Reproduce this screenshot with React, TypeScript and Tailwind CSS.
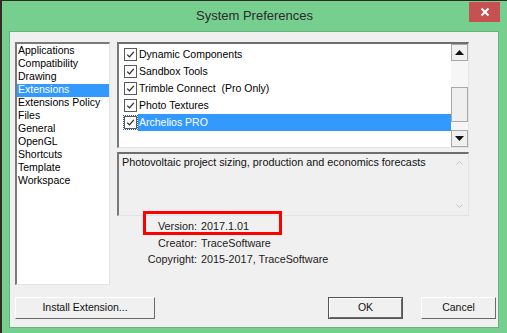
import React from 'react';

const categories = [
  'Applications',
  'Compatibility',
  'Drawing',
  'Extensions',
  'Extensions Policy',
  'Files',
  'General',
  'OpenGL',
  'Shortcuts',
  'Template',
  'Workspace',
];

const extensions = [
  { name: 'Dynamic Components', checked: true },
  { name: 'Sandbox Tools', checked: true },
  { name: 'Trimble Connect  (Pro Only)', checked: true },
  { name: 'Photo Textures', checked: true },
  { name: 'Archelios PRO', checked: true },
];

const details = [
  { label: 'Version:', value: '2017.1.01' },
  { label: 'Creator:', value: 'TraceSoftware' },
  { label: 'Copyright:', value: '2015-2017, TraceSoftware' },
];

function CheckBox({ focused }: { focused?: boolean }) {
  return (
    <div className={`flex h-[15px] w-[15px] items-center justify-center ${focused ? 'outline outline-1 outline-dotted outline-[#2a5fa8] -outline-offset-1' : ''}`}>
      <div className="flex h-[13px] w-[13px] items-center justify-center border border-[#5a5a5a] bg-white">
        <svg width="11" height="11" viewBox="0 0 11 11">
          <polyline points="2.2,5.6 4.5,7.9 8.8,2.8" fill="none" stroke="#2a2a2a" strokeWidth="1.3" />
        </svg>
      </div>
    </div>
  );
}

function Arrow({ up }: { up?: boolean }) {
  return (
    <svg width="9" height="5" viewBox="0 0 9 5">
      <polygon points={up ? '0,5 9,5 4.5,0' : '0,0 9,0 4.5,5'} fill="#111" />
    </svg>
  );
}

function WinButton({ label, width, isDefault }: { label: string; width: string; isDefault?: boolean }) {
  return (
    <button
      className={`${width} h-[22px] ${isDefault ? 'border border-[#555555]' : ''} bg-[#f0f0f0]`}
    >
      <div className="flex h-full w-full items-center justify-center border-t border-l border-t-white border-l-white border-r border-b border-r-[#696969] border-b-[#696969] text-[10.5px] text-[#111]">
        {label}
      </div>
    </button>
  );
}

export default function App() {
  return (
    <div
      className="h-[333px] w-[507px] overflow-hidden bg-[#2f2b23] pl-[2px] pt-[1px]"
      style={{ fontFamily: '"Liberation Sans", Arial, sans-serif' }}
    >
      <div className="flex h-[332px] w-[505px] flex-col bg-[#77cf8f]">
        {/* Title bar */}
        <div className="relative flex h-[30px] items-center justify-center">
          <span className="text-[13px] text-[#2b2b2b]">System Preferences</span>
          <div className="absolute right-[7px] top-[1px] flex h-[20px] w-[31px] items-center justify-center bg-[#c75050]">
            <svg width="10" height="10" viewBox="0 0 10 10">
              <path d="M1.5 1.5 L8.5 8.5 M8.5 1.5 L1.5 8.5" stroke="#fff" strokeWidth="2" />
            </svg>
          </div>
        </div>

        {/* Client area */}
        <div className="ml-[7px] h-[297px] w-[490px] border border-[#66b47c] bg-[#f0f0f0] pl-[5px] pr-[2px] pt-[10px]">
          <div className="flex gap-[7px]">
            {/* Category list */}
            <div className="h-[243px] w-[95px] border-t-2 border-l-2 border-r border-b border-t-[#7a7a7a] border-l-[#7a7a7a] border-r-[#e3e3e3] border-b-[#e3e3e3] bg-white pt-[0.5px]">
              {categories.map((c) => (
                <div
                  key={c}
                  className={`flex h-[13px] items-center pl-[1px] text-[10.5px] ${
                    c === 'Extensions' ? 'bg-[#3399ff] text-white' : 'text-black'
                  }`}
                >
                  {c}
                </div>
              ))}
            </div>

            {/* Right column */}
            <div className="relative flex w-[352px] flex-col">
              {/* Extensions list */}
              <div className="flex h-[106px] border-t-2 border-l-2 border-r border-b border-t-[#6e6e6e] border-l-[#7a7a7a] border-r-[#e3e3e3] border-b-[#e3e3e3] bg-white">
                <div className="flex-1 pl-[4px] pt-[2px]">
                  {extensions.map((e, i) => {
                    const sel = i === extensions.length - 1;
                    return (
                      <div key={e.name} className="flex h-[17px] items-center">
                        <CheckBox focused={sel} />
                        <div
                          className={`flex h-full flex-1 items-center whitespace-pre pl-[1px] text-[10.5px] ${
                            sel ? 'bg-[#3399ff] text-white' : 'text-black'
                          }`}
                        >
                          {e.name}
                        </div>
                      </div>
                    );
                  })}
                </div>
                <div className="flex w-[17px] flex-col bg-[#f6f6f6]">
                  <div className="flex h-[17px] items-center justify-center border border-[#a8a8a8] bg-[#f0f0f0]">
                    <Arrow up />
                  </div>
                  <div className="h-[26px]" />
                  <div className="h-[35px] border border-[#a8a8a8] bg-[#efefef]" />
                  <div className="h-[8px]" />
                  <div className="flex h-[17px] items-center justify-center border border-[#a8a8a8] bg-[#f0f0f0]">
                    <Arrow />
                  </div>
                </div>
              </div>

              {/* Description */}
              <div className="mt-[4px] flex h-[64px] border-t-2 border-l-2 border-r border-b border-t-[#6e6e6e] border-l-[#7a7a7a] border-r-[#e3e3e3] border-b-[#e3e3e3] bg-[#f0f0f0]">
                <div className="flex-1 pl-[3px] pt-[1px] text-[10.8px] leading-[14px] text-[#111]">
                  Photovoltaic project sizing, production and economics forecasts
                </div>
                <div className="flex w-[17px] flex-col items-center justify-between py-[7px]">
                  <svg width="7" height="4" viewBox="0 0 7 4">
                    <polyline points="0.5,3.5 3.5,0.5 6.5,3.5" fill="none" stroke="#c4c4c4" />
                  </svg>
                  <svg width="7" height="4" viewBox="0 0 7 4">
                    <polyline points="0.5,0.5 3.5,3.5 6.5,0.5" fill="none" stroke="#c4c4c4" />
                  </svg>
                </div>
              </div>

              {/* Details */}
              <div className="mt-[2px] grid grid-cols-[80px_1fr] gap-x-[4px] text-[10.8px] leading-[16.5px] text-[#1a1a1a]">
                {details.map((d) => (
                  <React.Fragment key={d.label}>
                    <div className="text-right">{d.label}</div>
                    <div>{d.value}</div>
                  </React.Fragment>
                ))}
              </div>

              {/* Annotation */}
              <div className="absolute left-[26px] top-[169px] h-[24px] w-[139px] border-[3px] border-[#ff0000]" />
            </div>
          </div>

          {/* Buttons */}
          <div className="mt-[12px] flex items-center">
            <WinButton label="Install Extension..." width="w-[140px]" />
            <div className="ml-auto flex gap-[18px]">
              <WinButton label="OK" width="w-[75px]" isDefault />
              <WinButton label="Cancel" width="w-[75px]" />
            </div>
          </div>
        </div>
      </div>
    </div>
  );
}
